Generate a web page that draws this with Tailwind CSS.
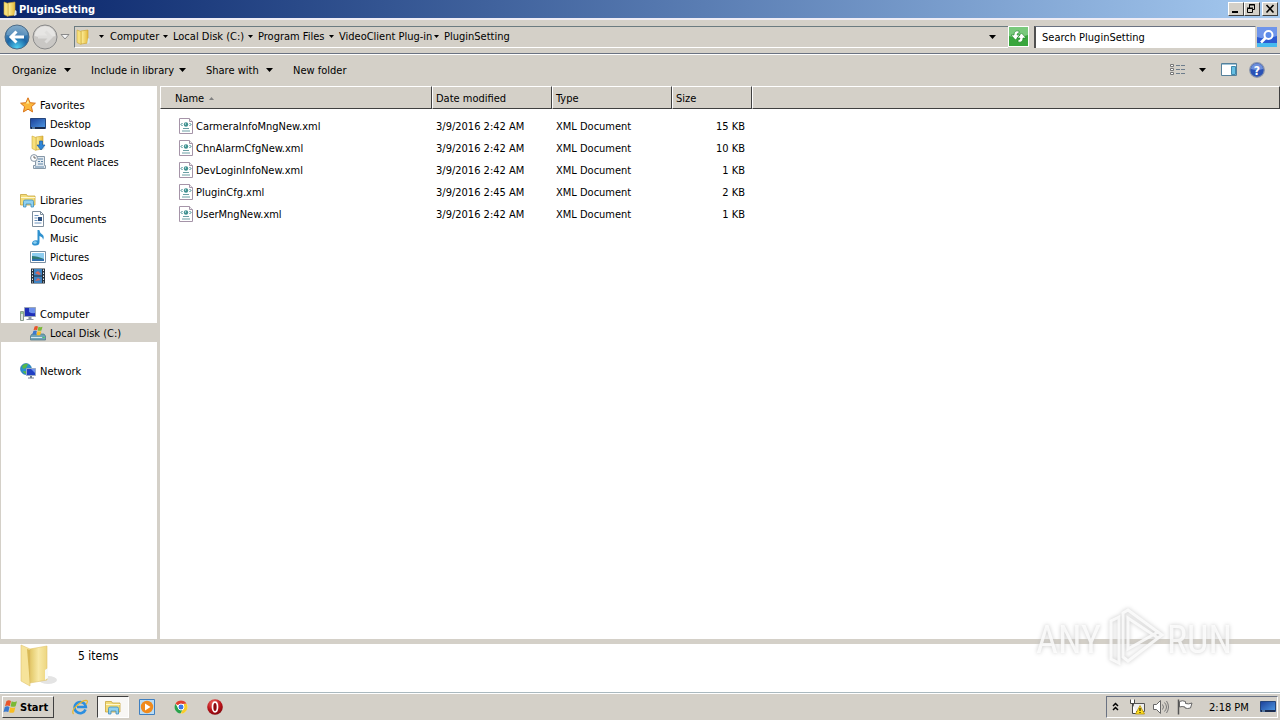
<!DOCTYPE html>
<html lang="en">
<head>
    <meta charset="UTF-8">
    <meta name="viewport" content="width=device-width, initial-scale=1.0">
    <title>PluginSetting</title>
    <script src="https://cdn.jsdelivr.net/npm/@tailwindcss/browser@4"></script>
</head>
<body class="h-screen flex flex-col overflow-hidden bg-[#d4d0c8] font-['DejaVu_Sans_Condensed','DejaVu_Sans',sans-serif] text-[11px] leading-4 text-black">
    <!-- Shared icons -->
    <svg class="absolute size-0">
        <defs>
            <linearGradient id="gold" x1="0" x2="1"><stop offset="0" stop-color="#fff2a0"/><stop offset="1" stop-color="#e3b93c"/></linearGradient>
            <linearGradient id="paleGold" x1="0" x2="1"><stop offset="0" stop-color="#e2c766"/><stop offset=".5" stop-color="#f8e9a6"/><stop offset="1" stop-color="#edd680"/></linearGradient>
            <linearGradient id="screen" x1="0" y1="0" x2="1" y2="1"><stop offset="0" stop-color="#1b3f98"/><stop offset="1" stop-color="#4f9be6"/></linearGradient>
            <radialGradient id="backBlue" cx=".5" cy=".95" r=".9"><stop offset="0" stop-color="#4fd0f2"/><stop offset=".5" stop-color="#1c66a6"/><stop offset="1" stop-color="#5f93bb"/></radialGradient>
            <radialGradient id="redBall" cx=".4" cy=".25" r=".8"><stop offset="0" stop-color="#f26a62"/><stop offset=".6" stop-color="#b81219"/><stop offset="1" stop-color="#7c060b"/></radialGradient>
        </defs>
        <symbol id="folder" viewBox="0 0 16 16">
            <path d="M6 2l7-1v13l-7 1z" fill="url(#gold)" stroke="#c9a02c" stroke-width=".6"/>
            <path d="M2 1l4 1.500v13L2 13.500z" fill="#f7e07c" stroke="#cfa938" stroke-width=".6"/>
            <path d="M13 9l1.500 1v4L12 15" fill="#d8e6ee"/>
        </symbol>
        <symbol id="explorer" viewBox="0 0 16 16">
            <path d="M.5 2.500h6l1 1.500h7.500v9H.5z" fill="#f3dc79" stroke="#c8a43d" stroke-width=".8"/>
            <path d="M1 5.500h14" stroke="#fff8cf"/>
            <path d="M3.500 15V9.500q0-1.500 1.500-1.500h7q1.500 0 1.500 1.500V15h-2.500v-3h-5v3z" fill="#8fd0ef" stroke="#3f8ebd" stroke-width=".8"/>
        </symbol>
        <symbol id="display" viewBox="0 0 16 16">
            <path d="M.5 2.500h15v10H.5z" fill="url(#screen)" stroke="#24457c"/>
            <path d="M1 12h14" stroke="#1b2c4e" stroke-width="2"/>
            <path d="M2 12h3" stroke="#8fc3f0"/>
        </symbol>
        <symbol id="flag" viewBox="0 0 16 16">
            <path d="M3.500 2q2.500-1.300 4.500 0L6.800 7Q4.500 5.800 2 7z" fill="#e8552a"/>
            <path d="M8.700 2.300q2.500 1.200 5.300 0L12.600 7.200Q10 8.300 7.500 7.200z" fill="#7ab935"/>
            <path d="M1.800 8q2.400-1.300 4.700 0l-1.200 5Q3 11.800.5 13z" fill="#3a79cd"/>
            <path d="M7.300 8.200q2.500 1.200 5.100 0l-1.300 5q-2.600 1-5 0z" fill="#f8bd22"/>
        </symbol>
        <symbol id="xml" viewBox="0 0 16 16">
            <path d="M1.500.5h10l3 3v12h-13z" fill="#fff" stroke="#a594a8"/>
            <path d="M11.500.5v3h3" fill="#eee" stroke="#a594a8"/>
            <path d="M4.500 5l-1.500 1.500L4.500 8M11.500 5L13 6.500 11.500 8" fill="none" stroke="#2e7f86"/>
            <circle cx="8" cy="6.500" r="2.200" fill="#3d8f8e"/><circle cx="7.500" cy="6" r=".7" fill="#c9ecea"/>
            <path d="M5 10.500h6M4 13h8" stroke="#6a9fa4"/>
        </symbol>
    </svg>

    <!-- Title bar -->
    <header class="flex h-[18px] shrink-0 items-center bg-linear-to-r from-[#0a246a] to-[#a6caf0] pl-[2px] pr-[2px] text-white">
        <svg class="size-4"><use href="#folder"/></svg>
        <h1 class="ml-px flex-1 pt-[2px] font-bold">PluginSetting</h1>
        <button aria-label="Minimize" class="h-[14px] w-4 border border-t-white border-l-white border-r-[#404040] border-b-[#404040] bg-[#d4d0c8]"><svg class="size-[12px]" viewBox="0 0 12 12"><path d="M3 9h6" stroke="#000" stroke-width="2"/></svg></button>
        <button aria-label="Restore" class="h-[14px] w-4 border border-t-white border-l-white border-r-[#404040] border-b-[#404040] bg-[#d4d0c8]"><svg class="size-[12px]" viewBox="0 0 12 12"><path d="M4.500 5V1.500h5v5H8M4 2h6M2.500 5.500h5v4h-5zM2 5h6" fill="none" stroke="#000"/></svg></button>
        <button aria-label="Close" class="ml-[2px] h-[14px] w-4 border border-t-white border-l-white border-r-[#404040] border-b-[#404040] bg-[#d4d0c8]"><svg class="ml-[1px] size-[12px]" viewBox="0 0 12 12"><path d="M2.500 2l7 7.500M9.500 2l-7 7.500" stroke="#000" stroke-width="1.600"/></svg></button>
    </header>

    <!-- Address bar -->
    <div class="flex h-9 shrink-0 items-center border-t-2 border-b border-t-[#eeecf5] border-b-gray-500 pl-1 pr-[3px] shadow-[0_1px_0_#fff]">
        <button aria-label="Back"><svg class="size-[26px]" viewBox="0 0 26 26"><circle cx="13" cy="13" r="12" fill="url(#backBlue)" stroke="#4d6b86"/><path d="M2.500 11a10.500 9.500 0 0 1 21 0q-10 3-21 0z" fill="#fff" opacity=".2"/><path d="M20 13H8M12.500 7.500L7 13l5.500 5.500" fill="none" stroke="#fff" stroke-width="3"/></svg></button>
        <button aria-label="Forward" class="ml-[2px]"><svg class="size-[26px]" viewBox="0 0 26 26"><circle cx="13" cy="13" r="12" fill="#c9c7c4" stroke="#8a8a8a"/><path d="M2.500 12a10.500 10 0 0 1 21 0q-10 3-21 0z" fill="#e6e5e3"/><path d="M6 13h12M13.500 7.500L19 13l-5.500 5.500" fill="none" stroke="#dedddb" stroke-width="3"/></svg></button>
        <button aria-label="Recent pages" class="ml-[2px]"><svg class="h-2 w-[10px]" viewBox="0 0 10 8"><path d="M1 1.500h8L5 6z" fill="#f4f4f4" stroke="#8a8a8a"/></svg></button>
        <nav aria-label="Address" class="ml-1 flex h-[22px] flex-1 items-center border-t border-l border-b border-t-[#6b7b80] border-l-[#6b7b80] border-b-white">
            <svg class="size-4"><use href="#folder"/></svg>
            <svg class="ml-2 h-[3px] w-[5px]" viewBox="0 0 5 3"><path d="M0 0h5L2.500 3z"/></svg>
            <a href="#" class="ml-[6px] w-[49px] whitespace-nowrap">Computer</a>
            <svg class="ml-1 h-[3px] w-[5px]" viewBox="0 0 5 3"><path d="M0 0h5L2.500 3z"/></svg>
            <a href="#" class="ml-[5px] w-[71px] whitespace-nowrap">Local Disk (C:)</a>
            <svg class="ml-1 h-[3px] w-[5px]" viewBox="0 0 5 3"><path d="M0 0h5L2.500 3z"/></svg>
            <a href="#" class="ml-[5px] w-[67px] whitespace-nowrap">Program Files</a>
            <svg class="ml-1 h-[3px] w-[5px]" viewBox="0 0 5 3"><path d="M0 0h5L2.500 3z"/></svg>
            <a href="#" class="ml-[5px] w-[94px] whitespace-nowrap">VideoClient Plug-in</a>
            <svg class="ml-px h-[3px] w-[5px]" viewBox="0 0 5 3"><path d="M0 0h5L2.500 3z"/></svg>
            <a href="#" class="ml-[5px] flex-1 whitespace-nowrap">PluginSetting</a>
            <button aria-label="Previous locations" class="mr-3"><svg class="h-1 w-[7px]" viewBox="0 0 7 4"><path d="M0 0h7L3.500 4z"/></svg></button>
        </nav>
        <button aria-label="Refresh" class="border border-white"><svg class="size-[19px]" viewBox="0 0 19 19"><path d="M0 0h19v19H0z" fill="#39a63d"/><path d="M0 0h19v8Q9 12 0 9z" fill="#79c97c"/><path d="M10 4q-5-1-5 4H2l4.500 5L11 8H8q0-2 2-2zM9 15q5 1 5-4h3l-4.500-5L8 11h3q0 2-2 2z" fill="#fff" stroke="#15801f" stroke-width=".6"/></svg></button>
        <input aria-label="Search" type="text" value="Search PluginSetting" class="ml-[5px] h-[22px] w-[222px] border-t border-l-2 border-r border-t-gray-500 border-l-[#505050] border-r-[#d4d0c8] bg-white pl-[6px] outline-none">
        <button aria-label="Start search" class="ml-px"><svg class="size-5" viewBox="0 0 20 20"><path d="M0 0h20v20H0z" fill="#2b5ad2"/><path d="M0 0h20v9Q9 13 0 10z" fill="#6f95ea"/><path d="M0 16h20v4H0z" fill="#45b9ee"/><circle cx="11.500" cy="8" r="4" fill="#5b8bea" stroke="#fff" stroke-width="2"/><path d="M8.500 11L4 15.500" stroke="#fff" stroke-width="2.600"/></svg></button>
    </div>

    <!-- Command bar -->
    <div class="flex h-8 shrink-0 items-center pl-3 pr-[15px]">
        <button class="flex items-center"><span class="w-11 pt-[2px] text-left whitespace-nowrap">Organize</span><svg class="ml-2 h-1 w-[7px]" viewBox="0 0 7 4"><path d="M0 0h7L3.500 4z"/></svg></button>
        <button class="ml-5 flex items-center"><span class="w-20 pt-[2px] text-left whitespace-nowrap">Include in library</span><svg class="ml-2 h-1 w-[7px]" viewBox="0 0 7 4"><path d="M0 0h7L3.500 4z"/></svg></button>
        <button class="ml-5 flex items-center"><span class="w-[52px] pt-[2px] text-left whitespace-nowrap">Share with</span><svg class="ml-2 h-1 w-[7px]" viewBox="0 0 7 4"><path d="M0 0h7L3.500 4z"/></svg></button>
        <button class="ml-5 pt-[2px]">New folder</button>
        <button aria-label="Change view" class="ml-auto"><svg class="size-4" viewBox="0 0 16 16"><path d="M.5 2.500h3v2h-3zM.5 6.500h3v2h-3zM.5 10.500h3v2h-3z" fill="#fff" stroke="#777"/><path d="M6 3.500h4m1 0h4M6 7.500h4m1 0h4M6 11.500h4m1 0h4" stroke="#6d7d8c"/></svg></button>
        <button aria-label="More views" class="ml-[13px]"><svg class="h-1 w-[7px]" viewBox="0 0 7 4"><path d="M0 0h7L3.500 4z"/></svg></button>
        <button aria-label="Preview pane" class="ml-[15px]"><svg class="size-4" viewBox="0 0 16 16"><path d="M.5 1.500h15v12H.5z" fill="#fff" stroke="#54809b"/><path d="M1 2.500h14" stroke="#9fc4d8"/><path d="M10.500 4.500h4v8h-4z" fill="#67bfe3" stroke="#3e89ad"/></svg></button>
        <button aria-label="Help" class="ml-3"><svg class="size-4" viewBox="0 0 16 16"><circle cx="8" cy="8" r="7.300" fill="#2a52b6" stroke="#8b96ad" stroke-width="1.200"/><path d="M2 7a6 5.500 0 0 1 12 0q-6 2-12 0z" fill="#6d8fdc"/><text x="8" y="12.500" text-anchor="middle" font-size="12" font-weight="bold" fill="#fff">?</text></svg></button>
    </div>

    <main class="flex min-h-0 flex-1">
        <!-- Navigation pane -->
        <nav aria-label="Folders" class="ml-px flex w-[156px] shrink-0 flex-col gap-[19px] bg-white pt-[9px] [&_a]:pt-[2px]">
            <ul>
                <li class="flex h-[19px] items-center pl-[19px]"><svg class="size-4" viewBox="0 0 16 16"><path d="M8 .8l2.100 4.900 5.300.5-4 3.500 1.200 5.200L8 12.200l-4.600 2.700 1.200-5.200-4-3.500 5.300-.5z" fill="#fbb83c" stroke="#d9741b"/><path d="M8 3l1.200 3.500H6z" fill="#fff0a0"/></svg><a href="#" class="ml-1">Favorites</a></li>
                <li class="flex h-[19px] items-center pl-[29px]"><svg class="size-4"><use href="#display"/></svg><a href="#" class="ml-1">Desktop</a></li>
                <li class="flex h-[19px] items-center pl-[29px]"><svg class="size-4" viewBox="0 0 16 16"><use href="#folder"/><path d="M9.500 6h3v4H15l-4 5-4-5h2.500z" fill="#2f86d8" stroke="#1b5da3" stroke-width=".7"/></svg><a href="#" class="ml-1">Downloads</a></li>
                <li class="flex h-[19px] items-center pl-[29px]"><svg class="size-4" viewBox="0 0 16 16"><path d="M5.500 2.500h9v9h1v3h-12v-3h2z" fill="#e3eaf0" stroke="#8798a8"/><path d="M8 5h5M8 7.500h2m1 0h2M8 10h5M5 13h9" stroke="#5d83a6"/><circle cx="4" cy="4" r="3.400" fill="#fff" stroke="#8595a5"/><path d="M4 2v2h2" fill="none" stroke="#444" stroke-width=".8"/></svg><a href="#" class="ml-1">Recent Places</a></li>
            </ul>
            <ul>
                <li class="flex h-[19px] items-center pl-[19px]"><svg class="size-4"><use href="#explorer"/></svg><a href="#" class="ml-1">Libraries</a></li>
                <li class="flex h-[19px] items-center pl-[29px]"><svg class="size-4" viewBox="0 0 16 16"><path d="M2.500.5h8l3 3v12h-11z" fill="#fff" stroke="#7f8e9d"/><path d="M10.500.5v3h3" fill="none" stroke="#7f8e9d"/><path d="M4.500 4.500h4M4.500 7h3M4.500 9.500h3M4.500 12h7" stroke="#6c93bd"/><path d="M8 6h4v4H8z" fill="#2b4f80"/></svg><a href="#" class="ml-1">Documents</a></li>
                <li class="flex h-[19px] items-center pl-[29px]"><svg class="size-4" viewBox="0 0 16 16"><path d="M7.500 0h1.800q.5 3 3 4.500 2.500 2 .7 5.500.2-3-3.500-4v6q0 3.500-4 3.500-3.500 0-3.500-2.300Q2.500 10.300 6 10.300l1.500.2z" fill="#2f91cf"/><ellipse cx="5" cy="12.500" rx="1.800" ry="1.200" fill="#8dd0f0"/></svg><a href="#" class="ml-1">Music</a></li>
                <li class="flex h-[19px] items-center pl-[29px]"><svg class="size-4" viewBox="0 0 16 16"><path d="M.5 2.500h15v11H.5z" fill="#fff" stroke="#7a8fa2"/><path d="M2 4h12v8H2z" fill="#8ecdf0"/><path d="M2 7q5 0 12 3v2H2z" fill="#2f7a75"/><path d="M2 10h12v2H2z" fill="#2f6fae"/></svg><a href="#" class="ml-1">Pictures</a></li>
                <li class="flex h-[19px] items-center pl-[29px]"><svg class="size-4" viewBox="0 0 16 16"><path d="M1 .5h14v15H1z" fill="#26303a"/><path d="M4 1h8v6.500H4zM4 8.500h8V15H4z" fill="#3d84c4"/><path d="M5 5l3-2 3 3-2 1zM5 13l3-3 3 2z" fill="#d4685e"/><path d="M2.500 1.500v13M13.500 1.500v13" stroke="#e7edf2" stroke-dasharray="1.500 1.500"/></svg><a href="#" class="ml-1">Videos</a></li>
            </ul>
            <ul>
                <li class="flex h-[19px] items-center pl-[19px]"><svg class="size-4" viewBox="0 0 16 16"><path d="M.5 5.500h3v9h-3z" fill="#dfe6df" stroke="#8b9c8e"/><path d="M1 7h2" stroke="#4caf50"/><path d="M4.500 1.500h11v9h-11z" fill="#1f2fb8" stroke="#9aa6b8"/><path d="M9 2h6v5q-3 1-6-1z" fill="#6b8fec"/><path d="M8.500 11h3v2h2v1h-7v-1h2z" fill="#8b96a5"/></svg><a href="#" class="ml-1">Computer</a></li>
                <li class="flex h-[19px] items-center bg-[#d4d0c8] pl-[29px]"><svg class="size-4" viewBox="0 0 16 16"><path d="M2 9h12l1.500 2v4H.5v-4z" fill="#6fa3b5" stroke="#4a7484" stroke-width=".7"/><path d="M1 12.500h11" stroke="#d5e9f0"/><path d="M13 12.500h1.500" stroke="#3ae04b"/><use href="#flag" x="2" y="0" width="12" height="12"/></svg><a href="#" class="ml-1">Local Disk (C:)</a></li>
            </ul>
            <ul>
                <li class="flex h-[19px] items-center pl-[19px]"><svg class="size-4" viewBox="0 0 16 16"><circle cx="6" cy="6" r="5.500" fill="#2b8fd0" stroke="#1f6da5" stroke-width=".6"/><path d="M2 3q3-3 6-2L6 5 3 6zM3 8l4 .5L6 11q-3-1-3-3z" fill="#55b948"/><path d="M6.500 5.500h9v7h-9z" fill="#2040c4" stroke="#9aabc6"/><path d="M11 6h4v4z" fill="#6e93ee"/><path d="M10 13h2v1.500h2v1H8v-1h2z" fill="#707d8c"/></svg><a href="#" class="ml-1">Network</a></li>
            </ul>
        </nav>
        <div class="w-[3px] shrink-0 bg-[#d4d0c8]"></div>

        <!-- File list -->
        <section class="flex-1 bg-white">
            <table class="w-full table-fixed border-separate border-spacing-0 text-left whitespace-nowrap">
                <colgroup><col class="w-[272px]"><col class="w-[120px]"><col class="w-[120px]"><col class="w-20"><col></colgroup>
                <thead>
                    <tr class="h-[23px] bg-[#d4d0c8]">
                        <th class="border border-t-white border-l-white border-r-[#404040] border-b-[#404040] p-0 pt-[2px] pl-[14px] font-normal">Name <svg class="ml-[2px] inline h-[3px] w-[5px] align-middle" viewBox="0 0 5 3"><path d="M0 3h5L2.500 0z" fill="#808080"/></svg></th>
                        <th class="border border-t-white border-l-white border-r-[#404040] border-b-[#404040] p-0 pt-[2px] pl-[3px] font-normal">Date modified</th>
                        <th class="border border-t-white border-l-white border-r-[#404040] border-b-[#404040] p-0 pt-[2px] pl-[3px] font-normal">Type</th>
                        <th class="border border-t-white border-l-white border-r-[#404040] border-b-[#404040] p-0 pt-[2px] pl-[3px] font-normal">Size</th>
                        <td class="border border-t-white border-l-white border-r-[#404040] border-b-[#404040] p-0"></td>
                    </tr>
                </thead>
                <tbody class="[&_span]:pt-[2px]">
                    <tr class="h-[6px]"><td colspan="5" class="p-0"></td></tr>
                    <tr class="h-[22px]">
                        <td class="p-0 pl-[18px]"><div class="flex items-center gap-[2px]"><svg class="size-4"><use href="#xml"/></svg><span>CarmeraInfoMngNew.xml</span></div></td>
                        <td class="p-0 pt-[2px] pl-1">3/9/2016 2:42 AM</td><td class="p-0 pt-[2px] pl-1">XML Document</td><td class="p-0 pt-[2px] pr-[7px] text-right">15 KB</td><td class="p-0"></td>
                    </tr>
                    <tr class="h-[22px]">
                        <td class="p-0 pl-[18px]"><div class="flex items-center gap-[2px]"><svg class="size-4"><use href="#xml"/></svg><span>ChnAlarmCfgNew.xml</span></div></td>
                        <td class="p-0 pt-[2px] pl-1">3/9/2016 2:42 AM</td><td class="p-0 pt-[2px] pl-1">XML Document</td><td class="p-0 pt-[2px] pr-[7px] text-right">10 KB</td><td class="p-0"></td>
                    </tr>
                    <tr class="h-[22px]">
                        <td class="p-0 pl-[18px]"><div class="flex items-center gap-[2px]"><svg class="size-4"><use href="#xml"/></svg><span>DevLoginInfoNew.xml</span></div></td>
                        <td class="p-0 pt-[2px] pl-1">3/9/2016 2:42 AM</td><td class="p-0 pt-[2px] pl-1">XML Document</td><td class="p-0 pt-[2px] pr-[7px] text-right">1 KB</td><td class="p-0"></td>
                    </tr>
                    <tr class="h-[22px]">
                        <td class="p-0 pl-[18px]"><div class="flex items-center gap-[2px]"><svg class="size-4"><use href="#xml"/></svg><span>PluginCfg.xml</span></div></td>
                        <td class="p-0 pt-[2px] pl-1">3/9/2016 2:45 AM</td><td class="p-0 pt-[2px] pl-1">XML Document</td><td class="p-0 pt-[2px] pr-[7px] text-right">2 KB</td><td class="p-0"></td>
                    </tr>
                    <tr class="h-[22px]">
                        <td class="p-0 pl-[18px]"><div class="flex items-center gap-[2px]"><svg class="size-4"><use href="#xml"/></svg><span>UserMngNew.xml</span></div></td>
                        <td class="p-0 pt-[2px] pl-1">3/9/2016 2:42 AM</td><td class="p-0 pt-[2px] pl-1">XML Document</td><td class="p-0 pt-[2px] pr-[7px] text-right">1 KB</td><td class="p-0"></td>
                    </tr>
                </tbody>
            </table>
        </section>
    </main>

    <!-- Details pane -->
    <section class="flex h-[53px] shrink-0 items-start border-t-[5px] border-[#d4d0c8] bg-white pl-5">
        <svg class="h-11 w-10" viewBox="0 0 40 44">
            <ellipse cx="28" cy="36" rx="9" ry="4" fill="#e4e4e4"/>
            <path d="M10 5l17-3v34l-17 3z" fill="url(#paleGold)" stroke="#e0c56e" stroke-width=".6"/>
            <path d="M1 1l9 4v37L1 37z" fill="#f6e39a" stroke="#e0c56e" stroke-width=".6"/>
            <path d="M7 5l3 1v35z" fill="#d9b957"/>
            <path d="M25 26l3-2v10l-3 2z" fill="#f7fafb"/>
        </svg>
        <p class="ml-[18px] mt-1 text-xs leading-4">5 items</p>
    </section>

    <!-- Taskbar -->
    <footer class="flex h-7 shrink-0 items-center border-t border-[#aab9bf] pl-[2px] pr-[2px] shadow-[inset_0_1px_0_#fff]">
        <button class="flex h-[22px] w-[52px] items-center border border-t-white border-l-white border-r-[#404040] border-b-[#404040] font-bold"><svg class="size-4 shrink-0"><use href="#flag"/></svg><span class="ml-[1px] pt-[2px]">Start</span></button>
        <button aria-label="Internet Explorer" class="ml-[18px]"><svg class="size-4" viewBox="0 0 16 16"><path d="M13.500 10.500A5.600 5.600 0 1 1 13.800 8H5" fill="none" stroke="#2b8ee0" stroke-width="2.600"/><path d="M1.500 15Q-1 12 5 6.500T14.800 1.500q1.500 1-.8 4" fill="none" stroke="#e8b62a" stroke-width="1.200"/></svg></button>
        <button aria-label="Windows Explorer" class="ml-[9px] flex h-[22px] w-8 items-center justify-center border border-t-[#404040] border-l-[#404040] border-r-white border-b-white bg-[#f8f7f5]"><svg class="size-4"><use href="#explorer"/></svg></button>
        <button aria-label="Media Player" class="ml-[10px]"><svg class="size-4" viewBox="0 0 16 16"><path d="M.5.500h15v15H.5z" fill="#b9dcf5" stroke="#3f7fc0"/><circle cx="8" cy="8" r="6.200" fill="#f08a1c"/><path d="M6 4.500v7L11.500 8z" fill="#fff"/></svg></button>
        <button aria-label="Chrome" class="ml-[18px]"><svg class="size-4" viewBox="0 0 16 16"><circle cx="8" cy="8" r="6.500" fill="#fff"/><path d="M8 8L2.400 4.700A6.500 6.500 0 0 1 13.600 4.700L8 5z" fill="#e0402f"/><path d="M2.400 4.700A6.500 6.500 0 0 0 7.500 14.500L10.500 9.500 8 11 5.500 9.500z" fill="#2ba24c"/><path d="M13.600 4.700A6.500 6.500 0 0 1 7.500 14.500L11 9V5z" fill="#f8cc2c"/><circle cx="8" cy="8" r="3" fill="#3b78e7" stroke="#fff"/></svg></button>
        <button aria-label="Opera" class="ml-[18px]"><svg class="size-4" viewBox="0 0 16 16"><circle cx="8" cy="8" r="7.800" fill="url(#redBall)"/><ellipse cx="8" cy="8" rx="2.500" ry="4.800" fill="#8d0a10" stroke="#fff" stroke-width="1.700"/></svg></button>

        <div class="ml-auto flex h-[22px] items-center border border-t-gray-500 border-l-gray-500 border-r-white border-b-white pl-[5px] pr-[1px]">
            <button aria-label="Show hidden icons"><svg class="h-3 w-[7px]" viewBox="0 0 7 12"><path d="M1 5l2.500-2.500L6 5M1 9l2.500-2.500L6 9" fill="none" stroke="#000" stroke-width="1.500"/></svg></button>
            <svg class="ml-[10px] size-4" viewBox="0 0 16 16"><path d="M4.500 4.500h11v8h-11z" fill="#eee" stroke="#555"/><path d="M1.500.500v4h4v-4M3.500 5v9.500H8" fill="#fff" stroke="#444"/><path d="M11 6.500L15.500 15h-9z" fill="#ffdd21" stroke="#a98600" stroke-width=".7"/><path d="M11 9v3m0 1v1" stroke="#000"/></svg>
            <svg class="ml-2 size-4" viewBox="0 0 16 16"><path d="M.5 5.500h3l4-4v13l-4-4h-3z" fill="#fff" stroke="#666"/><path d="M9.500 5.500q2 2.500 0 5M11.500 3.500q4 4.500 0 9M13.500 2q4 6 0 12" fill="none" stroke="#777"/></svg>
            <svg class="ml-2 size-4" viewBox="0 0 16 16"><path d="M1.500.500v15" stroke="#555" stroke-width="1.500"/><path d="M2.500 2.500q3-1.500 6 0v2q3 1 6.500-.5l-1.500 5q-3 1-5.500 0V8q-3-1-5.500 0z" fill="#fff" stroke="#666"/></svg>
            <time class="ml-4 w-10 pt-[2px] whitespace-nowrap">2:18 PM</time>
            <button aria-label="Show desktop" class="ml-[11px]"><svg class="size-4"><use href="#display"/></svg></button>
        </div>
    </footer>

    <!-- Watermark over the window -->
    <div aria-hidden="true" class="pointer-events-none absolute right-12 bottom-12 flex items-center font-['Roboto_Condensed','Open_Sans_Condensed','Liberation_Sans_Narrow','Roboto',sans-serif] text-[38px] leading-none text-white/80 drop-shadow-[0_0_2px_#bbb]">
        <span>ANY</span>
        <svg class="ml-[6px] mr-[2px] h-16 w-[58px]" viewBox="0 0 58 64" fill="none" stroke="#fff" stroke-opacity=".8" stroke-width="3"><path d="M12 9L4 13v38l8 4V9zM16 5l5-3 34 25-4 3-30-20v31l30-17 4 3-34 26-5-4z"/></svg>
        <span>RUN</span>
    </div>
</body>
</html>
